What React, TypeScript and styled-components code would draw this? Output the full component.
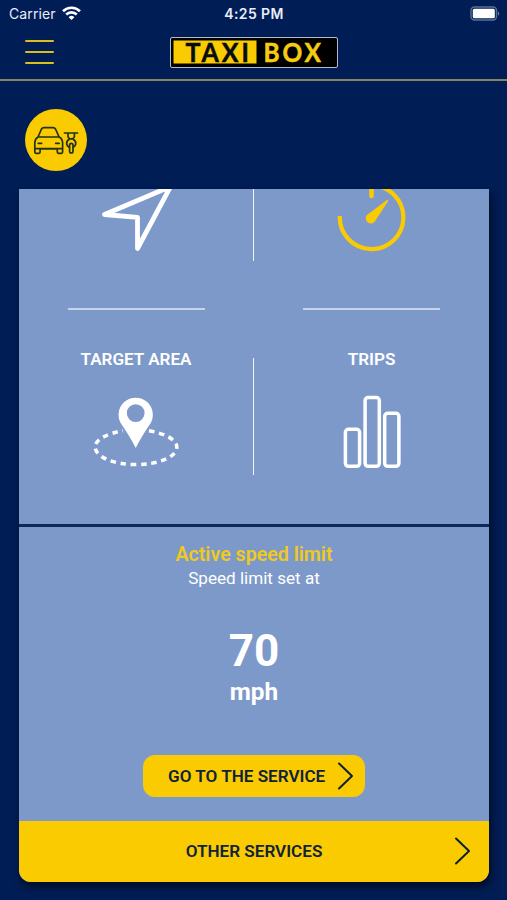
import React from "react";
import styled, { createGlobalStyle } from "styled-components";

const NAVY = "#001d55";
const YELLOW = "#facb00";
const BLUE = "#7d99ca";
const INK = "#10223a";

const GlobalStyle = createGlobalStyle`
  * { box-sizing: border-box; }
  body { margin: 0; background: ${NAVY}; }
  button { border: 0; padding: 0; background: none; font: inherit; color: inherit; cursor: pointer; }
  svg { display: block; flex: none; }
`;

const Screen = styled.div`
  display: flex;
  flex-direction: column;
  height: 900px;
  overflow: hidden;
  background: ${NAVY};
  color: #fff;
  font-family: Roboto, sans-serif;
`;

const StatusBar = styled.div`
  display: grid;
  grid-template-columns: 1fr auto 1fr;
  align-items: center;
  height: 28px;
  padding: 0 7px 0 9px;
  font-family: Inter, sans-serif;
  font-size: 14px;
  color: #e9eefa;
`;

const Carrier = styled.div`
  display: flex;
  align-items: center;
  gap: 6px;
  margin-top: -2px;
  letter-spacing: 0.1px;
`;

const Clock = styled.div`
  margin-top: -2px;
  padding-right: 1px;
  font-weight: 600;
  font-size: 14px;
  letter-spacing: 0.4px;
`;

const Battery = styled.div`
  display: flex;
  justify-content: flex-end;
  margin-top: -2px;
`;

const Header = styled.header`
  display: grid;
  grid-template-columns: 1fr auto 1fr;
  height: 53px;
  padding: 9px 25px 0;
  border-bottom: 2px solid #86855f;
`;

const MenuButton = styled.button`
  display: flex;
  flex-direction: column;
  gap: 8.5px;
  width: 29px;
  height: 29px;
  padding-top: 2.5px;
`;

const MenuLine = styled.span`
  height: 2.5px;
  border-radius: 2px;
  background: #dfbd1c;
`;

const Logo = styled.div`
  display: flex;
  width: 168px;
  height: 31px;
  padding: 2px;
  border: 1.5px solid #b4bacb;
  border-radius: 2px;
  background: #000;
`;

const Services = styled.div`
  display: flex;
  height: 108px;
  padding: 28px 25px 0;
`;

const ServiceBadge = styled.div`
  width: 62px;
  height: 62px;
  border-radius: 50%;
  background: ${YELLOW};
`;

const Card = styled.main`
  display: flex;
  flex-direction: column;
  height: 693px;
  margin: 0 18px 0 19px;
  overflow: hidden;
  border-radius: 0 0 12px 12px;
  background: ${BLUE};
  box-shadow: 2px 5px 9px rgba(0, 0, 0, 0.6);
`;

const Tiles = styled.section`
  display: grid;
  grid-template-columns: 234px 1px 235px;
  grid-template-rows: 121px 1fr;
  height: 335px;
`;

const Tile = styled.div<{ $underlined?: boolean }>`
  display: flex;
  flex-direction: column;
  align-items: center;
  padding-top: ${(p) => (p.$underlined ? 0 : "38px")};
`;

const TileRule = styled.div`
  width: 137px;
  height: 2px;
  margin-top: auto;
  background: #c6d3ea;
`;

const TileTitle = styled.h2`
  margin: 0 0 24px;
  font-size: 17.1px;
  line-height: 22px;
  font-weight: 600;
`;

const Divider = styled.div<{ $height: number; $top?: number }>`
  width: 1px;
  height: ${(p) => p.$height}px;
  margin-top: ${(p) => p.$top ?? 0}px;
  background: #f2f6fc;
`;

const Speed = styled.section`
  display: flex;
  flex-direction: column;
  align-items: center;
  height: 297px;
  padding-top: 16px;
  border-top: 3px solid #0a2a5e;
`;

const SpeedTitle = styled.h3`
  margin: 0;
  font-size: 19.6px;
  line-height: 24px;
  font-weight: 600;
  color: #efca1c;
`;

const SpeedNote = styled.p`
  margin: -1px 0 0;
  font-size: 17.1px;
  line-height: 25px;
`;

const SpeedValue = styled.div`
  margin-top: 33px;
  font-size: 44px;
  line-height: 54px;
  font-weight: 700;
`;

const SpeedUnit = styled.div`
  font-size: 24.4px;
  line-height: 28px;
  font-weight: 700;
`;

const GoButton = styled.button`
  display: flex;
  align-items: center;
  justify-content: space-between;
  width: 222px;
  height: 42px;
  margin-top: 48.5px;
  padding: 0 11.5px 0 25px;
  border-radius: 12px;
  background: ${YELLOW};
  color: ${INK};
  font-size: 17.1px;
  font-weight: 600;
`;

const OtherButton = styled.button`
  display: grid;
  grid-template-columns: 1fr auto 1fr;
  align-items: center;
  justify-items: end;
  height: 61px;
  padding: 0 18px 1px;
  background: ${YELLOW};
  color: ${INK};
  font-size: 17.1px;
  font-weight: 600;
`;

const OtherLabel = styled.span`
  grid-column: 2;
`;

const Chevron = () => (
  <svg width="17" height="30" viewBox="0 0 17 30" fill="none" stroke="#0d2238" strokeWidth="2" strokeLinecap="round" strokeLinejoin="round">
    <path d="M2 2.5 15 15 2 27.5" />
  </svg>
);

const WifiIcon = () => (
  <svg width="19" height="15" viewBox="0 0 19 15" fill="none" stroke="#fff" strokeWidth="2.6">
    <path d="M1 5.2a12.2 12.2 0 0 1 17 0M4.2 8.5a7.6 7.6 0 0 1 10.6 0" />
    <path d="M6.6 11.2a4.2 4.2 0 0 1 5.8 0L9.5 14z" fill="#fff" stroke="none" />
  </svg>
);

const BatteryIcon = () => (
  <svg width="30" height="15" viewBox="0 0 30 15">
    <rect x="1" y="1" width="25.5" height="13" rx="3.5" fill="none" stroke="#5a7098" strokeWidth="1.4" />
    <rect x="2.8" y="2.8" width="22" height="9.4" rx="1.5" fill="#fff" />
    <path d="M28 5.2q2.4 2.3 0 4.6z" fill="#7486a8" />
  </svg>
);

const LogoMark = () => (
  <svg width="160" height="23" viewBox="0 0 160 23" overflow="visible" fontFamily="Lato, sans-serif" fontWeight="700" fontSize="26" strokeWidth="0.5">
    <rect x="0.5" y="0.5" width="83" height="23" fill={YELLOW} />
    <text transform="translate(12.5 21.6) scale(0.96 1)" textLength="66" fill="#080b12" stroke="#080b12">TAXI</text>
    <text transform="translate(90.5 21.6) scale(0.94 1)" textLength="61" fill="#f5cc10" stroke="#f5cc10">BOX</text>
  </svg>
);

const VehiclesIcon = () => (
  <svg width="62" height="62" viewBox="25 109 62 62" fill="none" stroke="#22331d" strokeWidth="1.7" strokeLinecap="round" strokeLinejoin="round">
    <path d="M38 137l3.5-8q.8-1.4 2.4-1.4h9.2q1.6 0 2.4 1.4l3.6 8M38 137h21.2M38 137q-3.2 2-3.2 6v9q0 1.3 1.2 1.3h2.9q1.2 0 1.2-1.3v-3.2h17.2v3.2q0 1.3 1.2 1.3h2.9q1.2 0 1.2-1.3v-9q0-4-3.3-6M35 148.7h27.3M38.2 143.3h3.4M55.7 143.3h3.5" />
    <path d="M64.5 133h13M68 133.5v3.2l1.7 2.2h3l1.7-2.2v-3.2M69.4 139q-3.2 2-2.7 5 .4 2.2 2 3M73 139q3.2 2 2.7 5-.4 2.2-2 3" />
    <rect x="69.6" y="143.4" width="3.4" height="9.5" rx="1.7" />
  </svg>
);

const ArrowIcon = () => (
  <svg width="80" height="64" viewBox="96 189 80 64" fill="none" stroke="#fff" strokeWidth="4.8" strokeLinejoin="round">
    <path d="M104.5 214.5 170.5 186.6 137.5 248.5V217.3z" />
  </svg>
);

const StopwatchIcon = () => (
  <svg width="72" height="64" viewBox="336 189 72 64" fill="none" stroke={YELLOW} strokeWidth="4.2">
    <path d="M339.8 216a31.8 31.8 0 1 0 31.7-30.5" />
    <path d="M371.5 184v12" strokeWidth="4.6" strokeLinecap="round" />
    <path d="M387.2 199.8Q388.8 200 388 201.4L376 219.5A5.2 5.2 0 1 1 369 213.4z" fill={YELLOW} stroke="none" />
  </svg>
);

const TargetIcon = () => (
  <svg width="88" height="76" viewBox="92.5 395 88 76">
    <path d="M149.5 431.7C164 434.3 177.3 440 177.3 448 177.3 458 159 465.6 136.5 465.6S95.7 458 95.7 448C95.7 440 109 434.3 123.5 431.7" fill="none" stroke="#fff" strokeWidth="3.5" strokeDasharray="5.5 4.7" />
    <path fillRule="evenodd" fill="#fff" d="M136.2 449Q131 438.5 122.5 426A17.1 17.1 0 1 1 149.9 426Q141.5 438.5 136.2 449zM136.2 405.2a8.9 8.9 0 1 0 0 17.8a8.9 8.9 0 1 0 0-17.8z" />
  </svg>
);

const TripsIcon = () => (
  <svg width="60" height="76" viewBox="342 395 60 76" fill="none" stroke="#fff" strokeWidth="3.5">
    <rect x="345.4" y="430.3" width="14.2" height="37" rx="3" />
    <rect x="365.1" y="398.5" width="14.2" height="68.8" rx="3" />
    <rect x="384.7" y="414.3" width="14.2" height="53" rx="3" />
  </svg>
);

export default function App() {
  return (
    <Screen>
      <GlobalStyle />
      <StatusBar>
        <Carrier>Carrier <WifiIcon /></Carrier>
        <Clock>4:25 PM</Clock>
        <Battery><BatteryIcon /></Battery>
      </StatusBar>
      <Header>
        <MenuButton aria-label="Menu"><MenuLine /><MenuLine /><MenuLine /></MenuButton>
        <Logo><LogoMark /></Logo>
      </Header>
      <Services>
        <ServiceBadge><VehiclesIcon /></ServiceBadge>
      </Services>
      <Card>
        <Tiles>
          <Tile $underlined><ArrowIcon /><TileRule /></Tile>
          <Divider $height={72} />
          <Tile $underlined><StopwatchIcon /><TileRule /></Tile>
          <Tile>
            <TileTitle>TARGET AREA</TileTitle>
            <TargetIcon />
          </Tile>
          <Divider $height={117} $top={48} />
          <Tile>
            <TileTitle>TRIPS</TileTitle>
            <TripsIcon />
          </Tile>
        </Tiles>
        <Speed>
          <SpeedTitle>Active speed limit</SpeedTitle>
          <SpeedNote>Speed limit set at</SpeedNote>
          <SpeedValue>70</SpeedValue>
          <SpeedUnit>mph</SpeedUnit>
          <GoButton>GO TO THE SERVICE <Chevron /></GoButton>
        </Speed>
        <OtherButton>
          <OtherLabel>OTHER SERVICES</OtherLabel>
          <Chevron />
        </OtherButton>
      </Card>
    </Screen>
  );
}
